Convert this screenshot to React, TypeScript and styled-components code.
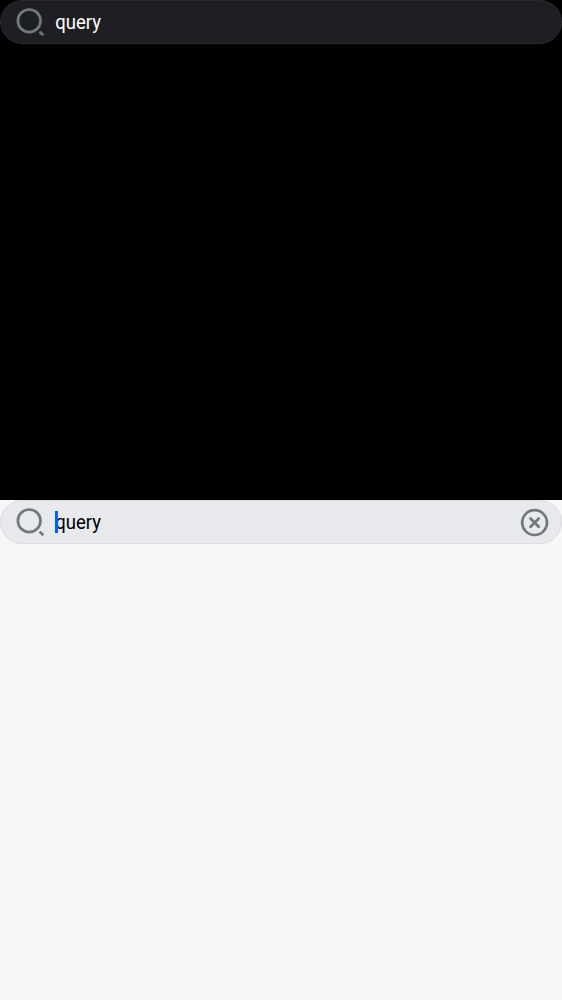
import React from "react";
import styled, { createGlobalStyle } from "styled-components";

const GlobalStyle = createGlobalStyle`
  body { margin: 0; font-family: Roboto, sans-serif; }
`;

const Panel = styled.section<{ $dark?: boolean }>`
  height: 500px;
  background: ${(p) => (p.$dark ? "#000000" : "#f7f7f7")};
`;

const SearchBar = styled.div<{ $dark?: boolean }>`
  display: flex;
  align-items: center;
  box-sizing: border-box;
  height: 44px;
  padding: 0 12px 0 15px;
  border: 1px solid ${(p) => (p.$dark ? "#282a2f" : "#dadce1")};
  border-radius: 22px;
  background: ${(p) => (p.$dark ? "#1e1f23" : "#e8e9ed")};
  color: ${(p) => (p.$dark ? "#ffffff" : "#000000")};
`;

const Icon = styled.svg`
  flex: none;
  width: 28px;
  height: 28px;
  overflow: visible;
  fill: none;
  stroke: #737880;
  stroke-width: 2.7;
`;

const Query = styled.span`
  position: relative;
  flex: 1;
  margin-left: 11px;
  font-size: 19.6px;
  line-height: 22px;
`;

const QueryText = styled.span`
  display: inline-block;
  transform: translate(0.3px, 1px) scaleX(0.945);
  transform-origin: left center;
`;

const Caret = styled.i`
  position: absolute;
  left: 0;
  top: 0;
  width: 3px;
  height: 22px;
  background: #005fff;
`;

function SearchIcon() {
  return (
    <Icon viewBox="0 0 28 28">
      <circle cx="13.2" cy="12.8" r="11.3" />
      <path d="M23.6 23.6L27.3 27.3" />
    </Icon>
  );
}

function ClearIcon() {
  return (
    <Icon viewBox="0 0 28 28">
      <circle cx="13.6" cy="14.6" r="12.4" />
      <path strokeLinecap="round" d="M9.5 10.5L17.7 18.7M17.7 10.5L9.5 18.7" />
    </Icon>
  );
}

export default function App() {
  return (
    <>
      <GlobalStyle />
      <Panel $dark>
        <SearchBar $dark>
          <SearchIcon />
          <Query><QueryText>query</QueryText></Query>
        </SearchBar>
      </Panel>
      <Panel>
        <SearchBar>
          <SearchIcon />
          <Query><QueryText>query</QueryText><Caret /></Query>
          <ClearIcon />
        </SearchBar>
      </Panel>
    </>
  );
}
